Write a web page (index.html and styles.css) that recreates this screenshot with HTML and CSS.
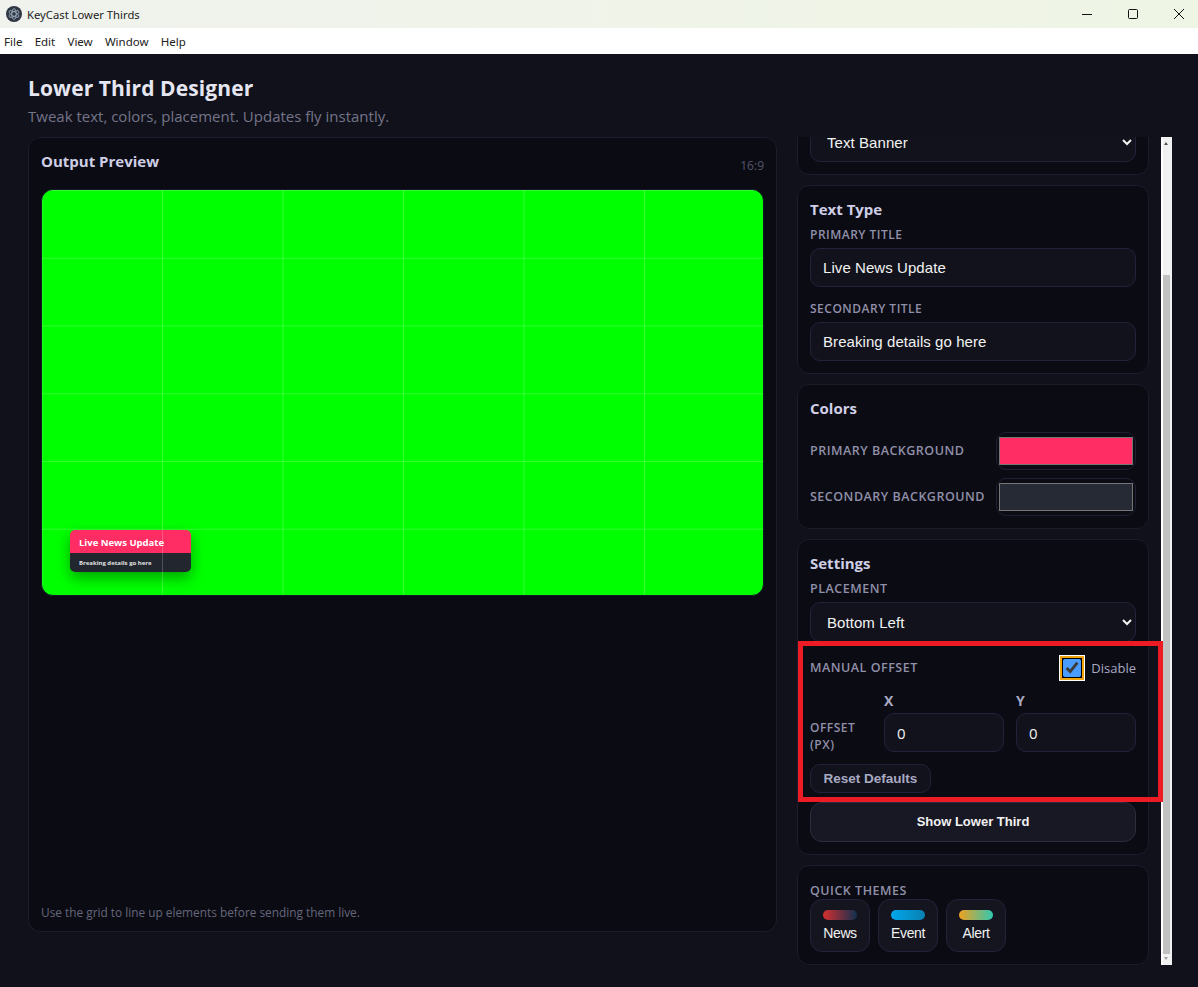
FILE: index.html
```html
<!DOCTYPE html>
<html lang="en">
<head>
    <meta charset="UTF-8">
    <meta name="viewport" content="width=device-width, initial-scale=1.0">
    <title>KeyCast Lower Thirds</title>
    <link rel="stylesheet" href="styles.css">
</head>
<body>
    <div class="titlebar">
        <svg class="app-icon" width="16" height="16" viewBox="0 0 16 16">
            <circle cx="8" cy="8" r="8" fill="#2f3542"/>
            <g fill="none" stroke="#9fb4c4" stroke-width="0.8">
                <ellipse cx="8" cy="8" rx="5.5" ry="2.2" transform="rotate(30 8 8)"/>
                <ellipse cx="8" cy="8" rx="5.5" ry="2.2" transform="rotate(90 8 8)"/>
                <ellipse cx="8" cy="8" rx="5.5" ry="2.2" transform="rotate(150 8 8)"/>
            </g>
        </svg>
        <span class="app-name">KeyCast Lower Thirds</span>
        <div class="window-controls">
            <svg width="12" height="12" viewBox="0 0 12 12"><path d="M1 6.5H11" stroke="#111" fill="none"/></svg>
            <svg width="12" height="12" viewBox="0 0 12 12"><rect x="1.5" y="1.5" width="9" height="9" rx="1" stroke="#111" fill="none"/></svg>
            <svg width="12" height="12" viewBox="0 0 12 12"><path d="M1 1L11 11M11 1L1 11" stroke="#111" fill="none"/></svg>
        </div>
    </div>
    <div class="menubar">
        <span>File</span>
        <span>Edit</span>
        <span>View</span>
        <span>Window</span>
        <span>Help</span>
    </div>

    <div class="app">
        <h1>Lower Third Designer</h1>
        <p class="subtitle">Tweak text, colors, placement. Updates fly instantly.</p>

        <div class="columns">
            <section class="card preview-card">
                <div class="preview-head">
                    <h2>Output Preview</h2>
                    <span class="ratio">16:9</span>
                </div>
                <div class="stage">
                    <div class="lower-third">
                        <div class="lt-primary">Live News Update</div>
                        <div class="lt-secondary">Breaking details go here</div>
                    </div>
                    <div class="grid-lines"></div>
                </div>
                <p class="hint">Use the grid to line up elements before sending them live.</p>
            </section>

            <div class="side">
                <div class="panel">
                    <section class="card type-card">
                        <select class="field field-select"><option>Text Banner</option></select>
                    </section>

                    <section class="card">
                        <h2>Text Type</h2>
                        <label class="label">Primary Title</label>
                        <input class="field" type="text" value="Live News Update">
                        <label class="label label-next">Secondary Title</label>
                        <input class="field" type="text" value="Breaking details go here">
                    </section>

                    <section class="card">
                        <h2>Colors</h2>
                        <div class="color-row first">
                            <label class="label label-wide">Primary Background</label>
                            <div class="color-well"><div class="swatch swatch-primary"></div></div>
                        </div>
                        <div class="color-row">
                            <label class="label label-wide">Secondary Background</label>
                            <div class="color-well"><div class="swatch swatch-secondary"></div></div>
                        </div>
                    </section>

                    <section class="card">
                        <h2>Settings</h2>
                        <label class="label label-wide">Placement</label>
                        <select class="field field-select"><option>Bottom Left</option></select>

                        <div class="offset-head">
                            <label class="label label-wide">Manual Offset</label>
                            <label class="check">
                                <input type="checkbox" checked>
                                <span>Disable</span>
                            </label>
                        </div>
                        <div class="offset-row">
                            <label class="label offset-label">Offset (px)</label>
                            <div class="offset-col">
                                <span class="axis">X</span>
                                <input class="field" type="number" value="0">
                            </div>
                            <div class="offset-col">
                                <span class="axis">Y</span>
                                <input class="field" type="number" value="0">
                            </div>
                        </div>
                        <button class="reset-btn">Reset Defaults</button>
                        <button class="show-btn">Show Lower Third</button>
                    </section>

                    <section class="card themes-card">
                        <label class="label label-wide">Quick Themes</label>
                        <div class="themes">
                            <button class="theme"><span class="pill pill-news"></span>News</button>
                            <button class="theme"><span class="pill pill-event"></span>Event</button>
                            <button class="theme"><span class="pill pill-alert"></span>Alert</button>
                        </div>
                    </section>
                </div>

                <div class="scrollbar">
                    <span class="arrow arrow-up"></span>
                    <div class="thumb"></div>
                    <span class="arrow arrow-down"></span>
                </div>
            </div>
        </div>
    </div>

    <div class="annotation"></div>
</body>
</html>
```

FILE: styles.css
```css
* {
    box-sizing: border-box;
}

body {
    margin: 0;
    height: 987px;
    overflow: hidden;
    font-family: "Open Sans", Arial, sans-serif;
    background-color: #10111a;
}

/* window chrome */
.titlebar {
    height: 28px;
    display: flex;
    align-items: center;
    padding-left: 6px;
    background: linear-gradient(90deg, #f0f2ed, #eff5e5);
}

.app-name {
    margin-left: 5px;
    font-size: 11.25px;
    color: #222222;
    font-family: "Noto Sans", sans-serif;
}

.window-controls {
    margin-left: auto;
    display: flex;
    gap: 34px;
    padding-right: 13px;
}

.menubar {
    height: 26px;
    display: flex;
    align-items: center;
    gap: 12.25px;
    padding-left: 4px;
    background-color: #ffffff;
    font-family: "Noto Sans", sans-serif;
    font-size: 11.5px;
    color: #222222;
}

/* app */
.app {
    padding: 20px 26px 0 28px;
}

h1 {
    margin: 0;
    font-size: 21px;
    line-height: 28px;
    font-weight: 700;
    letter-spacing: 0.1px;
    color: #e6e6f2;
}

.subtitle {
    margin: 4px 0 0;
    font-size: 15px;
    line-height: 20px;
    color: #75758a;
}

.columns {
    margin-top: 11px;
    display: flex;
    gap: 20px;
    align-items: flex-start;
}

.card {
    background-color: #0b0b14;
    border: 1px solid #1c1c2a;
    border-radius: 12px;
    padding: 12px;
}

h2 {
    margin: 0 0 7px;
    font-size: 15px;
    line-height: 22px;
    font-weight: 700;
    color: #cfcfe6;
}

/* preview */
.preview-card {
    width: 749px;
    height: 795px;
    display: flex;
    flex-direction: column;
    padding-bottom: 11px;
}

.preview-head {
    display: flex;
    justify-content: space-between;
    height: 39px;
}

.ratio {
    margin-top: 6px;
    font-size: 12px;
    line-height: 20px;
    color: #55556a;
}

.stage {
    position: relative;
    height: 407px;
    background-color: #00ff00;
    border: 1px solid #17172a;
    border-radius: 12px;
    overflow: hidden;
}

.grid-lines {
    position: absolute;
    inset: 0;
    background-image:
        linear-gradient(90deg, rgba(255, 255, 255, 0.2) 1px, transparent 1px),
        linear-gradient(0deg, rgba(255, 255, 255, 0.2) 1px, transparent 1px);
    background-size: 120.5px 100%, 100% 67.75px;
    background-position: 120px 0, 0 1px;
}

.lower-third {
    position: absolute;
    left: 28px;
    top: 340px;
    width: 121px;
    border-radius: 5px;
    overflow: hidden;
    box-shadow: 0 6px 14px rgba(0, 0, 0, 0.35);
}

.lt-primary {
    height: 23px;
    padding-left: 9px;
    background-color: #ff2d63;
    color: #ffffff;
    font-size: 9.5px;
    font-weight: 700;
    line-height: 25px;
}

.lt-secondary {
    height: 19px;
    padding-left: 9px;
    background-color: #22262f;
    color: #e0e0e0;
    font-size: 6px;
    font-weight: 700;
    line-height: 20px;
}

.hint {
    margin: auto 0 0;
    font-size: 11.85px;
    line-height: 16px;
    color: #66667a;
}

/* right column */
.side {
    display: flex;
    gap: 12px;
    height: 828px;
}

.panel {
    width: 352px;
    height: 828px;
    overflow: hidden;
    display: flex;
    flex-direction: column;
    gap: 10px;
}

.panel .card {
    flex-shrink: 0;
}

.type-card {
    margin-top: -28px;
}

.label {
    display: block;
    font-size: 12px;
    line-height: 16px;
    font-weight: 600;
    letter-spacing: 0.5px;
    text-transform: uppercase;
    color: #9090a8;
}

.label-wide {
    font-size: 12.5px;
}

.label-next {
    margin-top: 14px;
}

.field {
    display: block;
    width: 100%;
    height: 39px;
    margin-top: 5px;
    padding: 0 12px;
    background-color: #11121c;
    border: 1px solid #22233a;
    border-radius: 10px;
    color: #f2f2f2;
    font-family: "Liberation Sans", Arial, sans-serif;
    font-size: 15px;
    letter-spacing: 0.07px;
    outline: none;
}

.field-select {
    height: 40px;
    color-scheme: dark;
}

.type-card .field-select {
    margin-top: 0;
}

.color-row {
    display: flex;
    justify-content: space-between;
    align-items: center;
    margin-top: 8px;
}

.color-row.first {
    margin-top: 13px;
}

.color-well {
    width: 140px;
    height: 38px;
    padding: 4px 2px;
    border: 1px solid #1f2032;
    border-radius: 10px;
    background-color: #0b0b14;
}

.swatch {
    height: 100%;
    border: 1px solid #767676;
}

.swatch-primary {
    background-color: #ff2d63;
}

.swatch-secondary {
    background-color: #262a35;
}

.offset-head {
    display: flex;
    justify-content: space-between;
    align-items: center;
    margin-top: 17px;
}

.check {
    display: flex;
    align-items: center;
    gap: 10px;
    font-size: 13px;
    color: #a9a9c2;
}

.check input {
    width: 18px;
    height: 18px;
    margin: 0;
    accent-color: #4a9dff;
    outline: 1px solid #000000;
    border-radius: 2px;
    box-shadow: 0 0 0 3px #f0a30a, 0 0 0 4px #ffffff;
}

.offset-row {
    display: grid;
    grid-template-columns: 62px 120px 120px;
    column-gap: 12px;
    align-items: end;
    margin-top: 15px;
}

.offset-label {
    line-height: 17px;
    margin-bottom: -1px;
}

.axis {
    display: block;
    font-size: 14px;
    line-height: 18px;
    font-weight: 700;
    color: #a9a9c2;
}

.offset-col .field {
    margin-top: 3px;
    font-family: "Open Sans", sans-serif;
    font-size: 15px;
}

.reset-btn {
    display: block;
    width: 121px;
    height: 29px;
    margin-top: 12px;
    padding: 0;
    background-color: #11121c;
    border: 1px solid #22233a;
    border-radius: 10px;
    color: #a9a9c2;
    font-family: "Liberation Sans", Arial, sans-serif;
    font-size: 13.5px;
    font-weight: 700;
}

.show-btn {
    display: block;
    width: 100%;
    height: 40px;
    margin-top: 9px;
    padding-bottom: 2px;
    background-color: #181824;
    border: 1px solid #2c2c3c;
    border-radius: 12px;
    color: #f2f2f2;
    font-family: "Liberation Sans", Arial, sans-serif;
    font-size: 13px;
    font-weight: 700;
}

.themes-card {
    padding-top: 17px;
}

.themes {
    display: flex;
    gap: 8px;
}

.theme {
    width: 60px;
    height: 53px;
    display: flex;
    flex-direction: column;
    align-items: center;
    padding: 10px 0 0;
    background-color: #151520;
    border: 1px solid #22233a;
    border-radius: 12px;
    color: #f2f2f2;
    font-family: "Liberation Sans", Arial, sans-serif;
    font-size: 14px;
    letter-spacing: -0.4px;
}

.pill {
    width: 34px;
    height: 10px;
    margin-bottom: 5px;
    border-radius: 5px;
}

.pill-news {
    background: linear-gradient(90deg, #d62f2f, #10304f);
}

.pill-event {
    background: linear-gradient(90deg, #00a8ec, #0a7fb0);
}

.pill-alert {
    background: linear-gradient(90deg, #f0a020, #30c8b0);
}

/* scrollbar */
.scrollbar {
    position: relative;
    width: 11px;
    height: 828px;
    background-color: #f1f1f1;
    border-left: 2px solid #ffffff;
}

.thumb {
    position: absolute;
    left: 0;
    top: 138px;
    width: 7px;
    height: 679px;
    background-color: #c1c1c1;
}

.arrow {
    position: absolute;
    left: 1px;
    width: 0;
    height: 0;
    border-left: 2.5px solid transparent;
    border-right: 2.5px solid transparent;
}

.arrow-up {
    top: 5px;
    border-bottom: 3px solid #505050;
}

.arrow-down {
    bottom: 5px;
    border-top: 3px solid #a0a0a0;
}

/* red highlight drawn over the screenshot */
.annotation {
    position: absolute;
    left: 798px;
    top: 641px;
    width: 365px;
    height: 161px;
    border: 5px solid #ed1c24;
}
```
